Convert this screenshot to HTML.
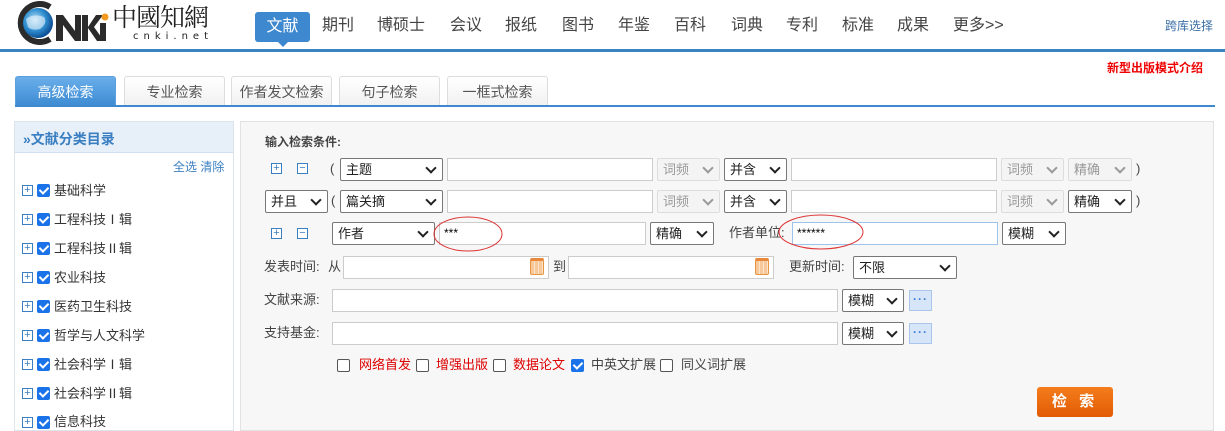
<!DOCTYPE html>
<html><head><meta charset="utf-8"><style>
*{margin:0;padding:0;box-sizing:border-box}
body{width:1225px;height:427px;overflow:hidden;background:#fff;position:relative;font-family:"Liberation Sans","Noto Sans CJK SC",sans-serif;color:#333;font-size:12px}
.a{position:absolute;white-space:nowrap}
.nav{top:14px;font-size:16px;color:#444;line-height:24px}
.tab{top:76px;height:30px;border:1px solid #ddd;border-bottom:none;border-radius:3px 3px 0 0;background:linear-gradient(#fff,#f1f1f1);font-size:14px;color:#555;text-align:center;line-height:30px}
.sel{height:23px;border:1px solid #777;border-radius:2px;background:#fff;font-size:13px;line-height:21px;padding-left:5px;color:#222}
.sel:after{content:"";position:absolute;right:7px;top:5px;width:6px;height:6px;border-right:2px solid #222;border-bottom:2px solid #222;transform:rotate(45deg)}
.sel.d{border-color:#ddd;background:#f4f4f4;color:#999}
.sel.d:after{border-color:#999}
.inp{height:23px;border:1px solid #ccc;background:#fff;font-size:12px;line-height:21px;padding-left:4px;color:#000}
.pm{width:11px;height:11px;border:1px solid #3a7fc1;color:#3a7fc1;font-size:11px;line-height:8px;text-align:center;background:#fff}
.lbl{font-size:13px;color:#444;line-height:16px}
.tree{font-size:13px;color:#333;line-height:16px}
.cb{width:13px;height:13px;border:1px solid #555;border-radius:2px;background:#fff}
.cb.on{background:#1a73e8;border-color:#1a73e8}
.cb.on:after{content:"";position:absolute;left:3px;top:0px;width:4px;height:7px;border-right:2px solid #fff;border-bottom:2px solid #fff;transform:rotate(45deg)}
.cal{width:14px;height:17px;background:repeating-linear-gradient(90deg,#f7c89a 0 3px,#fbe3cc 3px 4px);border:1px solid #e89440;border-top:3px solid #e8883a;border-radius:2px}
.dots{width:23px;height:21px;background:#d6e6f8;border:1px solid #a9c6ea;color:#3f7fcf;font-size:12px;font-weight:bold;text-align:center;line-height:16px;letter-spacing:1px}
</style></head><body>
<svg class="a" style="left:14px;top:1px" width="95" height="44" viewBox="0 0 95 44">
<defs><radialGradient id="g" cx="40%" cy="40%" r="60%"><stop offset="0" stop-color="#bfe4f7"/><stop offset="0.6" stop-color="#2f8fd0"/><stop offset="1" stop-color="#0e4f95"/></radialGradient></defs>
<path d="M36 6 A19 19 0 1 0 36 38" fill="none" stroke="#2b2b2b" stroke-width="6"/>
<circle cx="24" cy="22" r="15" fill="url(#g)"/>
<path d="M12 18 Q20 12 30 16 Q34 22 26 28 Q18 30 14 26Z" fill="#e8f4fb" opacity=".6"/>
<path d="M42 40 V14 h7 l12 16 V14 h6 v26 h-6 L49 24 v16Z" fill="#2b2b2b"/>
<path d="M68 14 h6 v12 l8 -12 h7 l-9 12 l10 14 h-7 l-9 -13 v13 h-6Z" fill="#2b2b2b"/>
<rect x="86" y="22" width="6" height="18" fill="#2b2b2b"/>
<circle cx="91" cy="16" r="3.5" fill="#f39a1f"/>
</svg>
<div class="a" style="left:112px;top:2px;font-size:25px;font-family:'Noto Serif CJK SC',serif;color:#222;letter-spacing:-1px;line-height:28px">中國知網</div>
<div class="a" style="left:133px;top:31px;font-size:10px;color:#222;letter-spacing:5px;font-family:'DejaVu Sans',sans-serif">cnki.net</div>
<div class="a" style="left:255px;top:12px;width:55px;height:30px;background:#3d88cf;border-radius:3px;color:#fff;font-size:16px;text-align:center;line-height:29px">文献</div>
<div class="a" style="left:277px;top:41px;width:0;height:0;border-left:6px solid transparent;border-right:6px solid transparent;border-top:6px solid #3d88cf"></div>
<div class="a nav" style="left:322px">期刊</div>
<div class="a nav" style="left:377px">博硕士</div>
<div class="a nav" style="left:450px">会议</div>
<div class="a nav" style="left:505px">报纸</div>
<div class="a nav" style="left:562px">图书</div>
<div class="a nav" style="left:618px">年鉴</div>
<div class="a nav" style="left:674px">百科</div>
<div class="a nav" style="left:731px">词典</div>
<div class="a nav" style="left:786px">专利</div>
<div class="a nav" style="left:842px">标准</div>
<div class="a nav" style="left:897px">成果</div>
<div class="a nav" style="left:953px">更多&gt;&gt;</div>
<div class="a" style="left:1165px;top:17px;font-size:12px;color:#3a6ea5">跨库选择</div>
<div class="a" style="left:0;top:49px;width:1225px;height:3px;background:#3a84c4"></div>
<div class="a" style="left:1107px;top:59px;font-size:12px;color:#e00;font-weight:bold">新型出版模式介绍</div>
<div class="a tab" style="left:15px;width:101px;background:linear-gradient(#6aaeea,#3d8bd3);border-color:#5a9fe0;color:#fff">高级检索</div>
<div class="a tab" style="left:124px;width:101px">专业检索</div>
<div class="a tab" style="left:231px;width:101px">作者发文检索</div>
<div class="a tab" style="left:339px;width:101px">句子检索</div>
<div class="a tab" style="left:447px;width:101px">一框式检索</div>
<div class="a" style="left:15px;top:105px;width:1200px;height:2px;background:#3d88cf"></div>
<div class="a" style="left:14px;top:121px;width:220px;height:310px;border:1px solid #dde4ec;background:#fff"></div>
<div class="a" style="left:15px;top:122px;width:218px;height:31px;background:#e7eff9;border-bottom:1px solid #d2dff0"></div>
<div class="a" style="left:23px;top:129px;font-size:14px;color:#3a7fc1;font-weight:bold">»文献分类目录</div>
<div class="a" style="left:173px;top:158px;font-size:12px;color:#3a7fc1">全选 清除</div>
<div class="a pm" style="left:22px;top:185px">+</div><div class="a cb on" style="left:37px;top:184px"></div><div class="a tree" style="left:54px;top:183px">基础科学</div>
<div class="a pm" style="left:22px;top:214px">+</div><div class="a cb on" style="left:37px;top:213px"></div><div class="a tree" style="left:54px;top:212px">工程科技Ⅰ辑</div>
<div class="a pm" style="left:22px;top:243px">+</div><div class="a cb on" style="left:37px;top:242px"></div><div class="a tree" style="left:54px;top:241px">工程科技Ⅱ辑</div>
<div class="a pm" style="left:22px;top:272px">+</div><div class="a cb on" style="left:37px;top:271px"></div><div class="a tree" style="left:54px;top:270px">农业科技</div>
<div class="a pm" style="left:22px;top:301px">+</div><div class="a cb on" style="left:37px;top:300px"></div><div class="a tree" style="left:54px;top:299px">医药卫生科技</div>
<div class="a pm" style="left:22px;top:330px">+</div><div class="a cb on" style="left:37px;top:329px"></div><div class="a tree" style="left:54px;top:328px">哲学与人文科学</div>
<div class="a pm" style="left:22px;top:359px">+</div><div class="a cb on" style="left:37px;top:358px"></div><div class="a tree" style="left:54px;top:357px">社会科学Ⅰ辑</div>
<div class="a pm" style="left:22px;top:388px">+</div><div class="a cb on" style="left:37px;top:387px"></div><div class="a tree" style="left:54px;top:386px">社会科学Ⅱ辑</div>
<div class="a pm" style="left:22px;top:417px">+</div><div class="a cb on" style="left:37px;top:416px"></div><div class="a tree" style="left:54px;top:414px">信息科技</div>
<div class="a" style="left:240px;top:121px;width:974px;height:310px;border:1px solid #e2e2e2;background:#f7f7f7"></div>
<div class="a" style="left:265px;top:133px;font-size:12px;font-weight:bold;color:#444">输入检索条件:</div>
<div class="a pm" style="left:271px;top:163px">+</div><div class="a pm" style="left:297px;top:163px">−</div>
<div class="a lbl" style="left:330px;top:161px">(</div>
<div class="a sel" style="left:340px;top:158px;width:103px">主题</div>
<div class="a inp" style="left:447px;top:158px;width:206px"></div>
<div class="a sel d" style="left:657px;top:158px;width:63px">词频</div>
<div class="a sel" style="left:724px;top:158px;width:63px">并含</div>
<div class="a inp" style="left:791px;top:158px;width:206px"></div>
<div class="a sel d" style="left:1001px;top:158px;width:63px">词频</div>
<div class="a sel d" style="left:1068px;top:158px;width:64px">精确</div>
<div class="a lbl" style="left:1136px;top:161px">)</div>
<div class="a sel" style="left:265px;top:190px;width:63px">并且</div>
<div class="a lbl" style="left:331px;top:193px">(</div>
<div class="a sel" style="left:340px;top:190px;width:103px">篇关摘</div>
<div class="a inp" style="left:447px;top:190px;width:206px"></div>
<div class="a sel d" style="left:657px;top:190px;width:63px">词频</div>
<div class="a sel" style="left:724px;top:190px;width:63px">并含</div>
<div class="a inp" style="left:791px;top:190px;width:206px"></div>
<div class="a sel d" style="left:1001px;top:190px;width:63px">词频</div>
<div class="a sel" style="left:1068px;top:190px;width:64px">精确</div>
<div class="a lbl" style="left:1136px;top:193px">)</div>
<div class="a pm" style="left:271px;top:228px">+</div><div class="a pm" style="left:297px;top:228px">−</div>
<div class="a sel" style="left:332px;top:222px;width:103px">作者</div>
<div class="a inp" style="left:439px;top:222px;width:207px">***</div>
<div class="a sel" style="left:650px;top:222px;width:64px">精确</div>
<div class="a lbl" style="left:729px;top:225px">作者单位:</div>
<div class="a inp" style="left:792px;top:222px;width:206px;border-color:#9ec3ea">******</div>
<div class="a sel" style="left:1002px;top:222px;width:64px">模糊</div>
<svg class="a" style="left:430px;top:212px" width="80" height="44"><ellipse cx="38" cy="22" rx="34" ry="17" fill="none" stroke="#d33" stroke-width="1"/></svg>
<svg class="a" style="left:775px;top:210px" width="95" height="44"><ellipse cx="46" cy="22" rx="42" ry="17" fill="none" stroke="#d33" stroke-width="1"/></svg>
<div class="a lbl" style="left:264px;top:259px">发表时间:</div>
<div class="a lbl" style="left:328px;top:259px">从</div>
<div class="a inp" style="left:343px;top:256px;width:206px"></div>
<div class="a cal" style="left:530px;top:258px"></div>
<div class="a lbl" style="left:553px;top:259px">到</div>
<div class="a inp" style="left:568px;top:256px;width:206px"></div>
<div class="a cal" style="left:755px;top:258px"></div>
<div class="a lbl" style="left:789px;top:259px">更新时间:</div>
<div class="a sel" style="left:853px;top:256px;width:104px">不限</div>
<div class="a lbl" style="left:264px;top:292px">文献来源:</div>
<div class="a inp" style="left:332px;top:289px;width:506px"></div>
<div class="a sel" style="left:842px;top:289px;width:62px">模糊</div>
<div class="a dots" style="left:909px;top:290px">···</div>
<div class="a lbl" style="left:264px;top:325px">支持基金:</div>
<div class="a inp" style="left:332px;top:322px;width:506px"></div>
<div class="a sel" style="left:842px;top:322px;width:62px">模糊</div>
<div class="a dots" style="left:909px;top:323px">···</div>
<div class="a cb" style="left:337px;top:359px"></div><div class="a lbl" style="left:359px;top:357px;color:#d00">网络首发</div>
<div class="a cb" style="left:416px;top:359px"></div><div class="a lbl" style="left:436px;top:357px;color:#d00">增强出版</div>
<div class="a cb" style="left:493px;top:359px"></div><div class="a lbl" style="left:513px;top:357px;color:#d00">数据论文</div>
<div class="a cb on" style="left:571px;top:359px"></div><div class="a lbl" style="left:591px;top:357px">中英文扩展</div>
<div class="a cb" style="left:660px;top:359px"></div><div class="a lbl" style="left:681px;top:357px">同义词扩展</div>
<div class="a" style="left:1037px;top:387px;width:76px;height:30px;border-radius:3px;background:linear-gradient(#f47d1c,#e25b05);color:#fff;font-size:15px;font-weight:bold;text-align:center;line-height:30px;letter-spacing:4px">检 索</div>
</body></html>
